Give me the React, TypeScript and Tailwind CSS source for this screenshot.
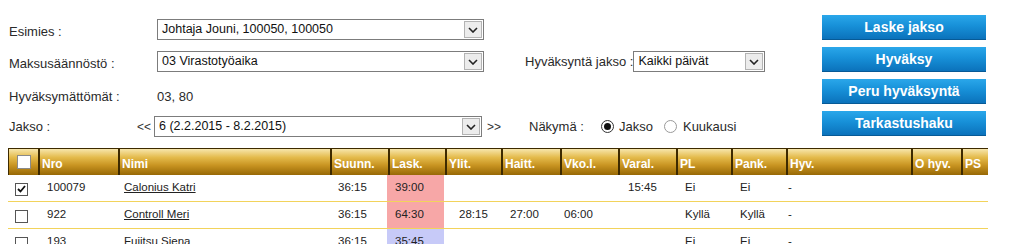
import React from 'react';

type Row = {
  checked: boolean;
  nro: string;
  nimi: string;
  suunn: string;
  lask: string;
  laskBg: string;
  ylit: string;
  haitt: string;
  vko: string;
  varal: string;
  pl: string;
  pank: string;
  hyv: string;
};

const rows: Row[] = [
  { checked: true, nro: '100079', nimi: 'Calonius Katri', suunn: '36:15', lask: '39:00', laskBg: 'bg-[#f7a7a7]', ylit: '', haitt: '', vko: '', varal: '15:45', pl: 'Ei', pank: 'Ei', hyv: '-' },
  { checked: false, nro: '922', nimi: 'Controll Meri', suunn: '36:15', lask: '64:30', laskBg: 'bg-[#f7a7a7]', ylit: '28:15', haitt: '27:00', vko: '06:00', varal: '', pl: 'Kyllä', pank: 'Kyllä', hyv: '-' },
  { checked: false, nro: '193', nimi: 'Fujitsu Siena', suunn: '36:15', lask: '35:45', laskBg: 'bg-[#c7caf8]', ylit: '', haitt: '', vko: '', varal: '', pl: 'Ei', pank: 'Ei', hyv: '-' },
];

const headers = ['Nro', 'Nimi', 'Suunn.', 'Lask.', 'Ylit.', 'Haitt.', 'Vko.l.', 'Varal.', 'PL', 'Pank.', 'Hyv.', 'O hyv.', 'PS'];

const grid = 'grid grid-cols-[29px_80px_212px_58px_57px_56px_59px_58px_58px_55px_55px_125px_50px_28px]';

const Select: React.FC<{ value: string; className?: string }> = ({ value, className }) => (
  <div className={`flex h-[21px] items-center border border-[#7c7c7c] bg-white ${className ?? ''}`}>
    <span className="flex-1 truncate pl-[4px] text-[12.5px] text-[#111]">{value}</span>
    <span className="mr-px flex h-[17px] w-[18px] items-center justify-center border border-[#b3b3b3] bg-[#ececec]">
      <svg width="10" height="6" viewBox="0 0 10 6">
        <path d="M1 1l4 4 4-4" fill="none" stroke="#222" strokeWidth="1.6" />
      </svg>
    </span>
  </div>
);

const Radio: React.FC<{ checked?: boolean }> = ({ checked }) => (
  <span className={`flex h-[13px] w-[13px] items-center justify-center rounded-full border bg-white ${checked ? 'border-[#333]' : 'border-[#9a9a9a]'}`}>
    {checked && <span className="h-[7px] w-[7px] rounded-full bg-[#111]" />}
  </span>
);

const Check: React.FC<{ checked?: boolean }> = ({ checked }) => (
  <span className="flex h-[13px] w-[13px] items-center justify-center border border-[#555] bg-white">
    {checked && (
      <svg width="9" height="8" viewBox="0 0 9 8">
        <path d="M1 4l2.5 2.5L8 1" fill="none" stroke="#111" strokeWidth="1.8" />
      </svg>
    )}
  </span>
);

const BlueButton: React.FC<{ label: string }> = ({ label }) => (
  <button className="h-[25px] w-[164px] border-b border-[#075a96] bg-[linear-gradient(to_bottom,#2aa7ea_0%,#1790d8_45%,#0b72bb_100%)] text-[14px] font-bold text-white">
    {label}
  </button>
);

export default function App() {
  return (
    <div className="h-[244px] w-[1024px] overflow-hidden bg-white font-['Liberation_Sans',Arial,sans-serif] text-[#222]">
      <div className="flex h-[148px]">
        <div className="w-[822px] pl-[9px] text-[13px] text-[#2a2a2a]">
          <div className="mt-[19px] flex h-[21px] items-center">
            <span className="w-[148px] pt-[5px]">Esimies :</span>
            <Select value="Johtaja Jouni, 100050, 100050" className="w-[327px]" />
          </div>
          <div className="mt-[11px] flex h-[21px] items-center">
            <span className="w-[148px] pt-[5px]">Maksusäännöstö :</span>
            <Select value="03 Virastotyöaika" className="w-[327px]" />
            <span className="ml-[41px]">Hyväksyntä jakso :</span>
            <Select value="Kaikki päivät" className="w-[132px]" />
          </div>
          <div className="mt-[14px] flex h-[21px] items-center">
            <span className="w-[148px]">Hyväksymättömät :</span>
            <span>03, 80</span>
          </div>
          <div className="mt-[9px] flex h-[21px] items-center">
            <span className="w-[128px]">Jakso :</span>
            <span className="w-[17px] text-[12px] text-[#333]">&lt;&lt;</span>
            <Select value="6 (2.2.2015 - 8.2.2015)" className="w-[328px]" />
            <span className="ml-[5px] w-[42px] text-[12px] text-[#333]">&gt;&gt;</span>
            <span className="w-[72px]">Näkymä :</span>
            <Radio checked />
            <span className="ml-[5px]">Jakso</span>
            <span className="ml-[11px]"><Radio /></span>
            <span className="ml-[6px]">Kuukausi</span>
          </div>
        </div>
        <div className="flex flex-col gap-[7px] pt-[15px]">
          <BlueButton label="Laske jakso" />
          <BlueButton label="Hyväksy" />
          <BlueButton label="Peru hyväksyntä" />
          <BlueButton label="Tarkastushaku" />
        </div>
      </div>

      <div className="ml-[8px] w-[980px]">
        <div className={`${grid} h-[27px] border-t border-l border-[#3d2a00] bg-[linear-gradient(to_bottom,#f7e6ac_0%,#e4bb4c_32%,#c99522_62%,#976805_100%)]`}>
          <div className="flex items-center justify-center">
            <span className="h-[14px] w-[14px] border border-[#8a8a8a] bg-white" />
          </div>
          {headers.map((h) => (
            <div key={h} className="flex items-end border-l-2 border-[#3d2a00] pb-[2px] pl-[2px] text-[12px] font-bold text-white">
              {h}
            </div>
          ))}
        </div>
        {rows.map((r) => (
          <div key={r.nro} className={`${grid} h-[27px] border-b border-[#f2d35b] text-[11.5px]`}>
            <div className="flex items-center pl-[7px] pt-[2px]"><Check checked={r.checked} /></div>
            <div className="flex items-center pl-[10px]">{r.nro}</div>
            <div className="flex items-center pl-[7px]"><span className="underline">{r.nimi}</span></div>
            <div className="flex items-center pl-[9px]">{r.suunn}</div>
            <div className={`flex items-center pl-[8px] ${r.laskBg}`}>{r.lask}</div>
            <div className="flex items-center pl-[15px]">{r.ylit}</div>
            <div className="flex items-center pl-[10px]">{r.haitt}</div>
            <div className="flex items-center pl-[5px]">{r.vko}</div>
            <div className="flex items-center pl-[11px]">{r.varal}</div>
            <div className="flex items-center pl-[10px]">{r.pl}</div>
            <div className="flex items-center pl-[10px]">{r.pank}</div>
            <div className="flex items-center pl-[3px]">{r.hyv}</div>
            <div />
            <div />
          </div>
        ))}
      </div>
    </div>
  );
}
